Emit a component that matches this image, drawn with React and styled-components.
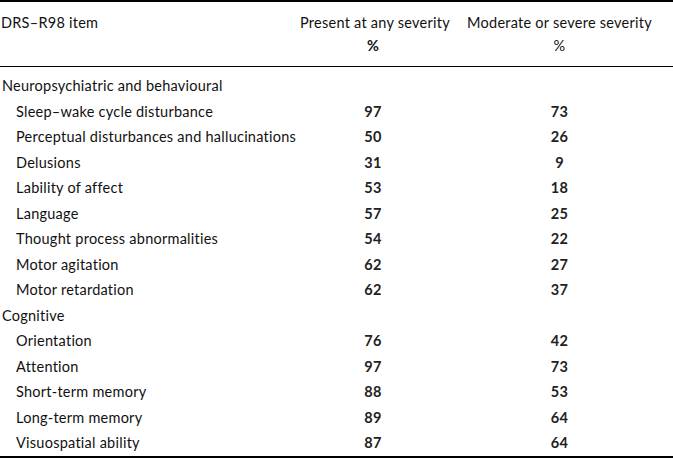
import React from "react";
import styled, { createGlobalStyle } from "styled-components";

const Global = createGlobalStyle`
  html, body { margin: 0; padding: 0; background: #fff; }
  body { font-family: Lato, "Open Sans", sans-serif; color: #111; }
`;

const Table = styled.table`
  width: 673px;
  border-collapse: collapse;
  table-layout: fixed;
  border-top: 2px solid #000;
  border-bottom: 3px solid #000;
  font-size: 14.5px;
  letter-spacing: 0.25px;
`;

const HeadRow = styled.tr`
  border-bottom: 1px solid #000;
`;

const HeadCell = styled.th`
  font-weight: 400;
  line-height: 23px;
  padding: 8.5px 0 9.5px ${(p) => (p.$left ? "1px" : "0")};
  text-align: ${(p) => (p.$left ? "left" : "center")};
  vertical-align: top;
  white-space: nowrap;
`;

const Unit = styled.div`
  font-weight: ${(p) => (p.$bold ? 700 : 400)};
`;

const Row = styled.tr`
  height: 25.5px;
`;

const Label = styled.td`
  line-height: 25.5px;
  padding: ${(p) => (p.$first ? "6px" : "0")} 0 0 ${(p) => (p.$sub ? "16px" : "2px")};
  white-space: nowrap;
`;

const Value = styled.td`
  line-height: 25.5px;
  padding: ${(p) => (p.$first ? "6px" : "0")} 0 0 0;
  text-align: center;
  font-weight: 700;
  color: #222;
`;

const rows = [
  { label: "Neuropsychiatric and behavioural", cat: true },
  { label: "Sleep–wake cycle disturbance", a: 97, b: 73 },
  { label: "Perceptual disturbances and hallucinations", a: 50, b: 26 },
  { label: "Delusions", a: 31, b: 9 },
  { label: "Lability of affect", a: 53, b: 18 },
  { label: "Language", a: 57, b: 25 },
  { label: "Thought process abnormalities", a: 54, b: 22 },
  { label: "Motor agitation", a: 62, b: 27 },
  { label: "Motor retardation", a: 62, b: 37 },
  { label: "Cognitive", cat: true },
  { label: "Orientation", a: 76, b: 42 },
  { label: "Attention", a: 97, b: 73 },
  { label: "Short-term memory", a: 88, b: 53 },
  { label: "Long-term memory", a: 89, b: 64 },
  { label: "Visuospatial ability", a: 87, b: 64 },
];

export default function App() {
  return (
    <>
      <Global />
      <Table>
        <colgroup>
          <col style={{ width: 300 }} />
          <col style={{ width: 146 }} />
          <col style={{ width: 227 }} />
        </colgroup>
        <thead>
          <HeadRow>
            <HeadCell $left>DRS–R98 item</HeadCell>
            <HeadCell>
              <div>Present at any severity</div>
              <Unit $bold>%</Unit>
            </HeadCell>
            <HeadCell>
              <div>Moderate or severe severity</div>
              <Unit>%</Unit>
            </HeadCell>
          </HeadRow>
        </thead>
        <tbody>
          {rows.map((r, i) => (
            <Row key={i}>
              <Label $sub={!r.cat} $first={i === 0}>
                {r.label}
              </Label>
              <Value $first={i === 0}>{r.a ?? ""}</Value>
              <Value $first={i === 0}>{r.b ?? ""}</Value>
            </Row>
          ))}
        </tbody>
      </Table>
    </>
  );
}
